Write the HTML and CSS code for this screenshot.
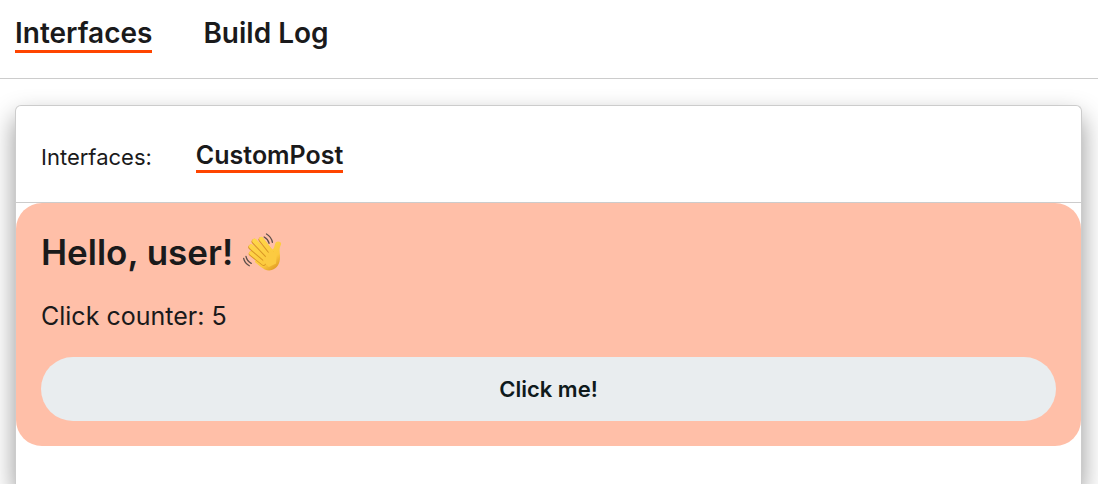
FILE: index.html
```html
<!DOCTYPE html>
<html lang="en">
<head>
<meta charset="utf-8">
<meta name="viewport" content="width=device-width, initial-scale=1">
<title>Interfaces</title>
<link rel="stylesheet" href="styles.css">
</head>
<body>
<nav class="tabs">
  <a class="tab tab-active" href="#interfaces">Interfaces</a>
  <a class="tab" href="#build-log">Build Log</a>
</nav>
<main class="content">
  <section class="card">
    <header class="card-header">
      <span class="card-label">Interfaces:</span>
      <a class="card-tab" href="#custom-post">CustomPost</a>
    </header>
    <div class="post">
      <h1 class="greeting">Hello, user!
        <svg class="wave" viewBox="22 20 118 118" role="img" aria-label="Waving hand">
          <defs>
            <linearGradient id="skin" gradientUnits="userSpaceOnUse" x1="50" y1="40" x2="122" y2="134">
              <stop offset="0" stop-color="#ffd84a"/>
              <stop offset="0.7" stop-color="#fcc93e"/>
              <stop offset="1" stop-color="#dd9420"/>
            </linearGradient>
          </defs>
          <path d="M64 92L98 62L111 70C115 68 116 63 119 53C122 45 130 44 136 49C139 52 136 57 134 62C131 70 134 80 134 93C134 112 125 127 109 132C97 136 86 130 74 121L58 108Z" fill="url(#skin)"/>
          <g fill="none" stroke-linecap="round">
            <path d="M47 83L84 112" stroke="#d99625" stroke-width="15"/>
            <path d="M47 81L84 110" stroke="url(#skin)" stroke-width="13"/>
            <path d="M46 63L88 99" stroke="#d99625" stroke-width="16"/>
            <path d="M47 61L89 97" stroke="url(#skin)" stroke-width="14"/>
            <path d="M56 46L97 89" stroke="#d99625" stroke-width="16"/>
            <path d="M57 44L98 87" stroke="url(#skin)" stroke-width="14"/>
            <path d="M76 40L107 79" stroke="#d99625" stroke-width="15"/>
            <path d="M77 38L108 77" stroke="url(#skin)" stroke-width="13"/>
          </g>
          <path d="M82 105L104 72L124 82L122 112L100 123Z" fill="#fccb41"/>
          <path d="M86 32C93 36 99 43 101 51M93 23C103 29 109 38 111 48M31 91C33 101 39 108 47 112M24 97C26 107 33 115 41 119" fill="none" stroke="#5f504b" stroke-width="4" stroke-linecap="round"/>
        </svg>
      </h1>
      <p class="counter">Click counter: 5</p>
      <button class="post-button" type="button">Click me!</button>
    </div>
  </section>
</main>
</body>
</html>
```
FILE: styles.css
```css
* {
  box-sizing: border-box;
}

body {
  display: flex;
  flex-direction: column;
  margin: 0;
  min-height: 100vh;
  background: #fff;
  color: #1a1a1b;
  font-family: Inter, "Liberation Sans", sans-serif;
}

.tabs {
  display: flex;
  align-items: flex-start;
  gap: 51px;
  padding: 17px 15px 25px;
  border-bottom: 1px solid #ccc;
}

.tab,
.card-tab {
  color: inherit;
  font-weight: 600;
  text-decoration: none;
  border-bottom: 3px solid transparent;
}

.tab {
  font-size: 28px;
  line-height: 33px;
}

.tab-active,
.card-tab {
  border-bottom-color: #ff4500;
}

.content {
  display: flex;
  flex: 1;
  padding: 26px 16px 0 15px;
}

.card {
  flex: 1;
  border: 1px solid #ccc;
  border-bottom: 0;
  border-radius: 6px 6px 0 0;
  background: #fff;
  box-shadow: 0 12px 26px rgba(0, 0, 0, 0.42);
}

.card-header {
  display: flex;
  align-items: center;
  gap: 44px;
  padding: 34px 25px 29px;
  border-bottom: 1px solid #ccc;
}

.card-label {
  font-size: 22px;
  line-height: 30px;
}

.card-tab {
  font-size: 25px;
  line-height: 30px;
}

.post {
  padding: 25px;
  border-radius: 26px;
  background: #ffbfa8;
}

.greeting {
  display: flex;
  align-items: center;
  gap: 10px;
  margin: 0;
  font-size: 35px;
  font-weight: 600;
  line-height: 48px;
}

.wave {
  width: 39px;
  height: 39px;
}

.counter {
  margin: 24px 0;
  font-size: 25px;
  line-height: 33px;
}

.post-button {
  display: block;
  width: 100%;
  height: 64px;
  border: 0;
  border-radius: 32px;
  background: #e9edef;
  color: #0f1a1c;
  font: 600 22px/28px Inter, "Liberation Sans", sans-serif;
}
```
